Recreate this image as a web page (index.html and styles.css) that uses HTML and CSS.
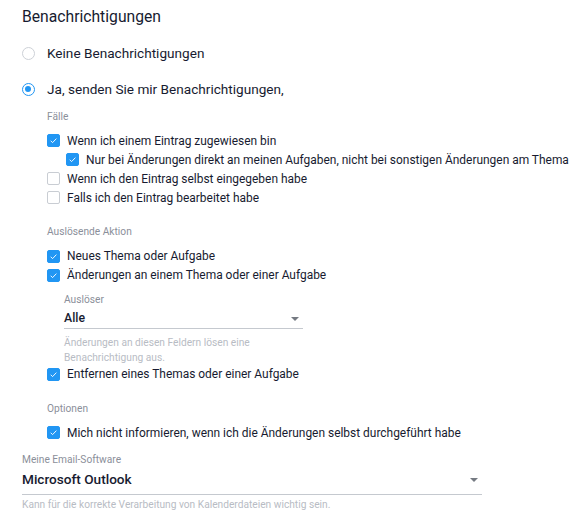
FILE: index.html
```html
<!DOCTYPE html>
<html lang="de">
<head>
<meta charset="utf-8">
<title>Benachrichtigungen</title>
<link rel="stylesheet" href="styles.css">
</head>
<body>
<div class="page">
  <div class="title">Benachrichtigungen</div>

  <div class="radio-row"><span class="radio"></span><span class="radio-label">Keine Benachrichtigungen</span></div>
  <div class="radio-row"><span class="radio checked"></span><span class="radio-label">Ja, senden Sie mir Benachrichtigungen,</span></div>

  <div class="section">
    <div class="group-label first">Fälle</div>
    <div class="cb-row"><span class="cb on"><svg viewBox="0 0 13 13"><path d="M3.2 6.8 L5.4 9 L9.9 4.3"/></svg></span><span>Wenn ich einem Eintrag zugewiesen bin</span></div>
    <div class="cb-row nested"><span class="cb on"><svg viewBox="0 0 13 13"><path d="M3.2 6.8 L5.4 9 L9.9 4.3"/></svg></span><span>Nur bei Änderungen direkt an meinen Aufgaben, nicht bei sonstigen Änderungen am Thema</span></div>
    <div class="cb-row"><span class="cb"></span><span>Wenn ich den Eintrag selbst eingegeben habe</span></div>
    <div class="cb-row"><span class="cb"></span><span>Falls ich den Eintrag bearbeitet habe</span></div>

    <div class="group-label">Auslösende Aktion</div>
    <div class="cb-row"><span class="cb on"><svg viewBox="0 0 13 13"><path d="M3.2 6.8 L5.4 9 L9.9 4.3"/></svg></span><span>Neues Thema oder Aufgabe</span></div>
    <div class="cb-row"><span class="cb on"><svg viewBox="0 0 13 13"><path d="M3.2 6.8 L5.4 9 L9.9 4.3"/></svg></span><span>Änderungen an einem Thema oder einer Aufgabe</span></div>

    <div class="trigger">
      <div class="field-label">Auslöser</div>
      <div class="select small"><span class="value">Alle</span><span class="arrow"></span></div>
      <div class="helper">Änderungen an diesen Feldern lösen eine<br>Benachrichtigung aus.</div>
    </div>

    <div class="cb-row"><span class="cb on"><svg viewBox="0 0 13 13"><path d="M3.2 6.8 L5.4 9 L9.9 4.3"/></svg></span><span>Entfernen eines Themas oder einer Aufgabe</span></div>

    <div class="group-label">Optionen</div>
    <div class="cb-row"><span class="cb on"><svg viewBox="0 0 13 13"><path d="M3.2 6.8 L5.4 9 L9.9 4.3"/></svg></span><span>Mich nicht informieren, wenn ich die Änderungen selbst durchgeführt habe</span></div>
  </div>

  <div class="email">
    <div class="field-label">Meine Email-Software</div>
    <div class="select large"><span class="value">Microsoft Outlook</span><span class="arrow"></span></div>
    <div class="helper one">Kann für die korrekte Verarbeitung von Kalenderdateien wichtig sein.</div>
  </div>
</div>
</body>
</html>
```

FILE: styles.css
```css
html, body {
  margin: 0;
  padding: 0;
  background: #ffffff;
}

.page {
  padding: 5px 22px 0 22px;
  font-family: Roboto, "Liberation Sans", sans-serif;
  color: #171b30;
  display: flex;
  flex-direction: column;
}

.title {
  height: 24px;
  line-height: 24px;
  font-size: 15.7px;
  margin-bottom: 6px;
}

.radio-row {
  height: 36px;
  display: flex;
  align-items: center;
  font-size: 13.6px;
}

.radio {
  box-sizing: border-box;
  width: 13px;
  height: 13px;
  border: 1px solid #cdd1d7;
  border-radius: 50%;
  margin-right: 12px;
  position: relative;
  flex: none;
}

.radio.checked {
  border: 1.5px solid #2196f3;
}

.radio.checked::after {
  content: "";
  position: absolute;
  left: 2px;
  top: 2px;
  width: 6px;
  height: 6px;
  border-radius: 50%;
  background: #2196f3;
}

.section {
  padding-left: 25px;
  display: flex;
  flex-direction: column;
}

.group-label {
  height: 16px;
  line-height: 16px;
  font-size: 10.2px;
  color: #8b8f9a;
  margin-top: 17px;
  margin-bottom: 6.5px;
}

.group-label.first {
  margin-top: 1.5px;
}

.cb-row {
  height: 19px;
  display: flex;
  align-items: center;
  font-size: 11.95px;
  white-space: nowrap;
}

.cb-row.nested {
  padding-left: 19px;
}

.cb {
  box-sizing: border-box;
  width: 13px;
  height: 13px;
  border: 1px solid #c9cdd3;
  border-radius: 2px;
  margin-right: 7px;
  flex: none;
  display: flex;
}

.cb.on {
  background: #2196f3;
  border-color: #2196f3;
}

.cb svg {
  width: 11px;
  height: 11px;
  fill: none;
  stroke: #ffffff;
  stroke-width: 1.1;
}

.trigger {
  padding-left: 17px;
  margin-top: 7.5px;
  display: flex;
  flex-direction: column;
}

.field-label {
  height: 16px;
  line-height: 16px;
  font-size: 10.2px;
  color: #8b8f9a;
}

.select {
  display: flex;
  align-items: center;
  justify-content: space-between;
  border-bottom: 1px solid #c5c9cf;
  box-sizing: border-box;
}

.select.small {
  width: 239px;
  height: 21px;
  font-size: 12.3px;
  font-weight: 500;
  padding-right: 4px;
}

.select.large {
  width: 460px;
  height: 27px;
  padding-bottom: 4px;
  font-size: 13.6px;
  font-weight: 500;
  padding-right: 4px;
}

.arrow {
  width: 0;
  height: 0;
  border-left: 4px solid transparent;
  border-right: 4px solid transparent;
  border-top: 4px solid #757a82;
  margin-top: 2px;
}

.helper {
  font-size: 10.2px;
  line-height: 15px;
  color: #b8bcc4;
  margin-top: 5.5px;
}

.email {
  margin-top: 10px;
  display: flex;
  flex-direction: column;
}

.helper.one {
  margin-top: 1.5px;
}
```
